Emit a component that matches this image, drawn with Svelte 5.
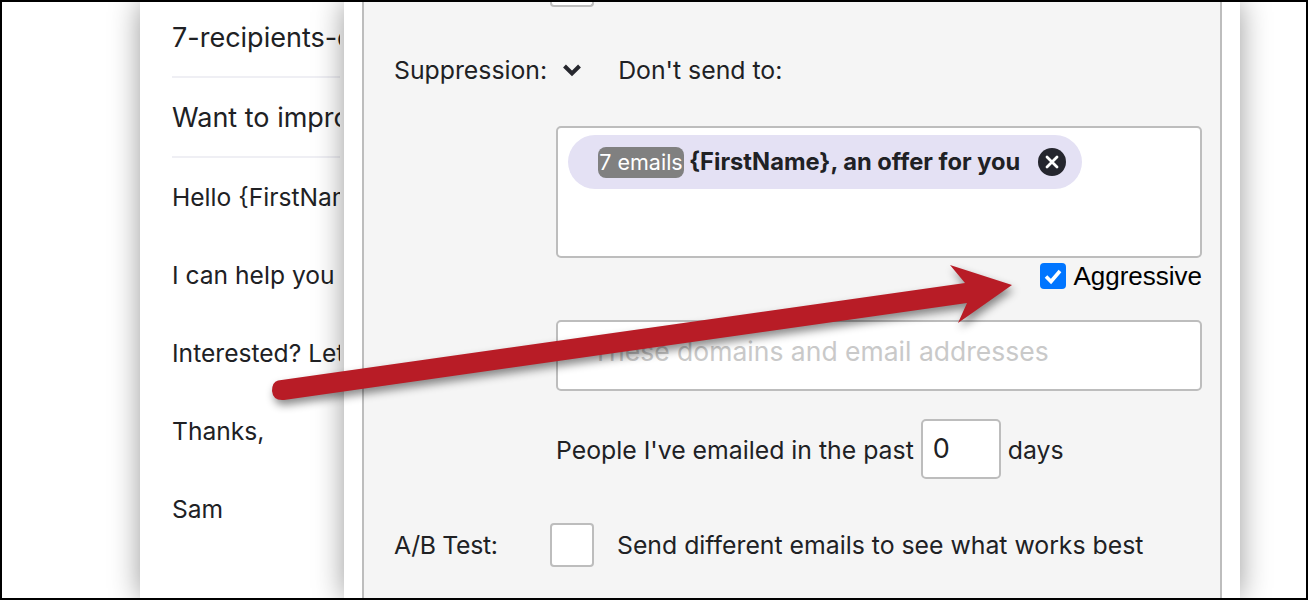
<script>
  const subjects = ['7-recipients-demo', 'Want to improve'];
  const lines = ['Hello {FirstName},', 'I can help you', 'Interested? Let', 'Thanks,', 'Sam'];
</script>

<div class="frame">
  <section class="card">
    <div class="card-inner">
      {#each subjects as s}
        <div class="subject">{s}</div>
      {/each}
      <div class="body">
        {#each lines as l}
          <p>{l}</p>
        {/each}
      </div>
    </div>
  </section>

  <section class="modal">
    <div class="panel">
      <div class="stub"></div>

      <div class="row supp">
        <span class="label">Suppression:</span>
        <svg class="chev" viewBox="0 0 20 14" width="20" height="14"><path d="M2.500 3L10 10.500L17.500 3" fill="none" stroke="#26272e" stroke-width="4" /></svg>
        <span class="dont">Don't send to:</span>
      </div>

      <div class="indent">
        <div class="box chips">
          <div class="chip">
            <span class="badge">7 emails</span>
            <span class="chip-text">{'{FirstName}'}, an offer for you</span>
            <svg class="close" viewBox="0 0 28 28" width="28" height="28">
              <circle cx="14" cy="14" r="14" fill="#25262e" />
              <path d="M9 9l10 10M19 9L9 19" stroke="#fff" stroke-width="2.8" stroke-linecap="round" />
            </svg>
          </div>
        </div>

        <div class="aggr">
          <span class="check">
            <svg viewBox="0 0 26 26" width="26" height="26"><path d="M6 13.500l5 5 9-10.500" fill="none" stroke="#fff" stroke-width="3.600" /></svg>
          </span>
          <span>Aggressive</span>
        </div>

        <div class="box domains">These domains and email addresses</div>

        <div class="past">
          <span class="t">People I've emailed in the past</span>
          <span class="num">0</span>
          <span class="t">days</span>
        </div>
      </div>

      <div class="row ab">
        <span class="label ab-label">A/B Test:</span>
        <span class="empty"></span>
        <span>Send different emails to see what works best</span>
      </div>
    </div>
  </section>

  <svg class="arrow" viewBox="0 0 1304 596" width="1304" height="596">
    <path transform="translate(-2 -2)" d="M278 380.500L965 283L950 265L1012 285L958 323L967 303L284 400Q273 401 272 391Q272 382 278 380.500Z" fill="#b81c26" />
  </svg>
</div>

<style>
  :global(body) {
    margin: 0;
    background: #fff;
  }
  .frame {
    position: relative;
    box-sizing: border-box;
    width: 1308px;
    height: 600px;
    border: 2px solid #000;
    overflow: hidden;
    background: #fff;
    font-family: Inter, "Liberation Sans", sans-serif;
    color: #202124;
    font-size: 24.8px;
  }
  .card {
    box-sizing: border-box;
    width: 204px;
    height: 596px;
    margin-left: 138px;
    background: #fff;
    box-shadow: 0 0 28px rgba(0, 0, 0, 0.4);
  }
  .card-inner {
    box-sizing: border-box;
    width: 200px;
    height: 100%;
    padding-left: 32px;
    overflow: hidden;
    white-space: nowrap;
  }
  .subject {
    height: 78px;
    line-height: 80px;
    border-bottom: 2px solid #efeff4;
    font-size: 27px;
  }
  .subject:first-child {
    margin-top: -4px;
  }
  .body {
    font-size: 24.6px;
  }
  .body p {
    margin: 0;
    height: 78px;
    line-height: 78px;
  }
  .modal {
    position: absolute;
    left: 342px;
    top: 0;
    bottom: 0;
    box-sizing: border-box;
    width: 896px;
    padding: 0 18px;
    background: #fff;
    box-shadow: 0 0 28px rgba(0, 0, 0, 0.4);
  }
  .panel {
    height: 100%;
    padding-left: 30px;
    background: #f5f5f5;
    border: solid #bdbdbd;
    border-width: 0 2px;
  }
  .stub {
    box-sizing: border-box;
    width: 44px;
    height: 5px;
    margin-left: 156px;
    background: #fff;
    border: 2px solid #bdbdbd;
    border-top: 0;
    border-radius: 0 0 4px 4px;
  }
  .row {
    display: flex;
    align-items: center;
  }
  .supp {
    height: 34px;
    margin-top: 46px;
  }
  .chev {
    margin-left: 15px;
  }
  .dont {
    margin-left: 36px;
  }
  .indent {
    width: 646px;
    margin: 39px 0 0 162px;
  }
  .box {
    box-sizing: border-box;
    background: #fff;
    border: 2px solid #bdbdbd;
    border-radius: 5px;
  }
  .chips {
    height: 132px;
    padding: 7px 10px;
  }
  .chip {
    display: inline-flex;
    align-items: center;
    box-sizing: border-box;
    width: 514px;
    height: 54px;
    padding-left: 30px;
    background: #e4e1f4;
    border-radius: 27px;
  }
  .badge {
    box-sizing: border-box;
    width: 86px;
    height: 31px;
    line-height: 31px;
    text-align: center;
    white-space: nowrap;
    background: #808080;
    color: #fff;
    border-radius: 8px;
    font-size: 21.5px;
  }
  .chip-text {
    margin: -2px 0 0 5px;
    font-weight: 700;
    font-size: 23.7px;
    color: #202124;
    white-space: nowrap;
  }
  .close {
    margin-left: auto;
    margin-right: 16px;
  }
  .aggr {
    display: flex;
    align-items: center;
    justify-content: flex-end;
    gap: 7px;
    height: 26px;
    margin-top: 5px;
    font-family: "Liberation Sans", sans-serif;
    color: #000;
    font-size: 26px;
  }
  .check {
    display: block;
    width: 26px;
    height: 26px;
    border-radius: 4px;
    background: #0075ff;
  }
  .check svg {
    display: block;
  }
  .domains {
    height: 71px;
    margin-top: 31px;
    padding-left: 34px;
    line-height: 59px;
    color: #c9c9c9;
    font-size: 26.5px;
  }
  .past {
    display: flex;
    align-items: center;
    height: 60px;
    margin-top: 28px;
  }
  .t {
    margin-top: 2px;
  }
  .num {
    box-sizing: border-box;
    width: 80px;
    height: 60px;
    margin: 0 7px;
    padding-left: 10px;
    line-height: 56px;
    font-size: 27px;
    background: #fff;
    border: 2px solid #bdbdbd;
    border-radius: 5px;
  }
  .ab {
    height: 44px;
    margin-top: 44px;
  }
  .ab-label {
    width: 156px;
    letter-spacing: -0.35px;
  }
  .empty {
    box-sizing: border-box;
    width: 44px;
    height: 44px;
    margin-right: 23px;
    background: #fff;
    border: 2px solid #bdbdbd;
    border-radius: 4px;
  }
  .arrow {
    position: absolute;
    left: 0;
    top: 0;
    filter: drop-shadow(2px 5px 4px rgba(0, 0, 0, 0.45));
    pointer-events: none;
  }
</style>
